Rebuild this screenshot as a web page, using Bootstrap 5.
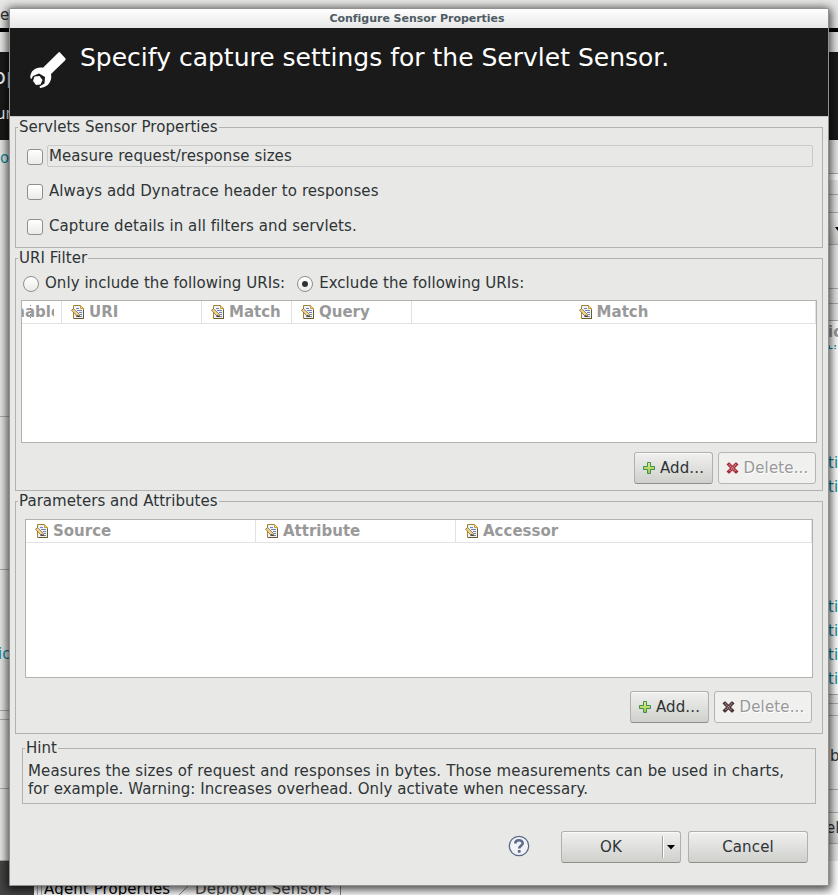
<!DOCTYPE html>
<html lang="en">
<head>
<meta charset="utf-8">
<title>Configure Sensor Properties</title>
<link href="https://cdn.jsdelivr.net/npm/bootstrap@5.3.0/dist/css/bootstrap.min.css" rel="stylesheet">
<style>
  body { width: 838px; height: 895px; overflow: hidden; font: 15px/18px "DejaVu Sans", sans-serif; letter-spacing: .08px; color: #2e3436; background: #fff; }
  .desktop { width: 838px; height: 895px; }
  /* windows behind the dialog */
  .parent-win { height: 861px; background: #e8e8e6; }
  .strip { display: grid; overflow: hidden; white-space: nowrap; align-content: start; }
  .strip > div { border-bottom: 1px solid #aaa; overflow: hidden; }
  .strip-l { width: 9px; grid-template-rows: 28px 4px 20px 88px 277px 153px 141px 9px 69px 72px; }
  .strip-r { width: 9px; grid-template-rows: 28px 4px 20px 88px 34px 6px 15px 18px 32px 44px 15px 17px 374px 9px 12px 74px 23px 31px 19px; }
  .strip > .blk { background: #000; border: 0; }
  .strip > .hdr { background: #1a1a1a; color: #fff; border: 0; }
  .strip > .plain { border: 0; }
  .strip > .tbl { background: #fff; }
  .strip > .face { background: linear-gradient(#f0f0ef, #cfcfcc); }
  .face svg { display: block; margin: 14px 0 0 6px; }
  .teal { color: #0c8c9c; }
  .big { font-size: 22px; line-height: 26px; padding-top: 12px; margin-left: -8px; }
  .t-e { padding-top: 6px; }
  .t-ur { padding-top: 15px; margin-left: -4px; }
  .t-o { padding-top: 9px; }
  .t-io { padding-top: 75px; margin-left: -2px; }
  .t-tbl { font-weight: bold; color: #999; padding-top: 2px; height: 22px; margin-left: -1px; }
  .t-cut { height: 6px; line-height: 18px; overflow: hidden; margin-left: -2px; }
  .t-ti { line-height: 24px; }
  .t-ti1 { padding-top: 102px; margin-left: -1px; }
  .t-ti2 { padding-top: 96px; }
  .t-b { padding-top: 31px; margin-left: 1px; }
  .t-el { padding-top: 6px; margin-left: -3px; }
  .below { height: 34px; }
  .dark-pane { width: 34px; background: #454545; }
  .tabs { color: #000; padding-top: 19px; margin-left: 3px; border-left: 1px solid #aaa; }
  .tabs .tab-a { border-left: 1px solid #aaa; padding-left: 2px; margin-left: 3px; width: 129px; }
  .tabs .tab-b { color: #444; width: 146px; border-right: 1px solid #888; }
  .tabs .slash { width: 25px; }
  /* dialog window */
  .dialog-win { position: absolute; left: 9px; top: 8px; width: 820px; height: 878px; border: 1px solid #90908e; border-radius: 2px 2px 0 0; background: #e8e8e6; box-shadow: 0 2px 10px 2px rgba(0,0,0,.72); }
  .titlebar { height: 19px; background: linear-gradient(#fff, #e6e6e6); font-size: 11px; line-height: 19px; letter-spacing: -.03px; font-weight: bold; color: #4e5c64; padding-right: 4px; }
  .banner { height: 88px; background: #1a1a1a; color: #fff; font-size: 25px; line-height: 30px; letter-spacing: 0; padding: 15px 0 0 20px; }
  .banner svg { margin-top: 8px; }
  .banner .heading { margin-left: 14px; }
  .content { border-top: 1px solid #c8c8c8; padding: 10px 5px 0; }
  .group { border: 1px solid #b2b2ae; margin-bottom: 10px; }
  .group .caption { display: table; height: 18px; margin: -10px 0 0 2px; padding: 0 1px; background: #e8e8e6; white-space: nowrap; letter-spacing: .04px; }
  .g1 { height: 121px; } .g2 { height: 233px; } .g3 { height: 233px; margin-bottom: 14px; }
  .g4 { height: 56px; margin: 0 7px 0 7px; }
  .opts { padding: 9px 9px 0 11px; gap: 13px; }
  .opt { height: 22px; gap: 4px; }
  .opt .txt { height: 22px; line-height: 18px; border: 1px solid transparent; padding: 1px; }
  .opt .focused { border-color: #cacaca; border-radius: 2px; }
  .box { width: 16px; height: 16px; margin-top: 2px; flex: none; border: 1px solid #8f8f8b; border-radius: 3px; background: linear-gradient(#fff, #ebebe9); }
  .dot { width: 16px; height: 16px; flex: none; border: 1px solid #8f8f8b; border-radius: 50%; background: linear-gradient(#fff, #ebebe9); }
  .dot.on::after { content: ""; display: block; width: 6px; height: 6px; margin: 4px; border-radius: 50%; background: #2e3436; }
  .radios { height: 22px; margin: 5px 0 0 7px; letter-spacing: .05px; }
  .radios .dot { margin-top: 2px; }
  .radios .txt { margin-left: 6px; margin-right: 12px; }
  .grid-box { border: 1px solid #b2b2ae; background: #fff; }
  .grid-1 { height: 143px; margin: 6px 5px 0 5px; }
  .grid-2 { height: 159px; margin: 9px 9px 0 9px; }
  .grid-head { height: 23px; border-bottom: 1px solid #e2e2e2; font-weight: bold; letter-spacing: 0; color: #999; line-height: 22px; }
  .grid-head > div { border-right: 1px solid #e2e2e2; padding-left: 9px; overflow: hidden; white-space: nowrap; height: 22px; }
  .grid-head svg { margin-right: 5px; flex: none; margin-top: 4px; }
  .grid-head .c40 { width: 40px; padding: 0 7px 0 0; }
  .c40 .clip { width: 32px; overflow: hidden; background: repeating-linear-gradient(#777 0 1px, transparent 1px 3px) 8px 4px / 1px 13px no-repeat; }
  .c40 .clip span { margin-left: -18px; }
  .c140 { width: 140px; } .c90 { width: 90px; } .c120 { width: 120px; } .c404 { width: 404px; }
  .c230 { width: 230px; } .c200 { width: 200px; } .c356 { width: 356px; }
  .grid-head .c404 { padding-left: 0; }
  .actions { gap: 5px; }
  .a1 { margin: 9px 6px 0 0; } .a2 { margin: 13px 10px 0 0; }
  .btn.gtk { --bs-btn-padding-x: 0; --bs-btn-padding-y: 0; height: 32px; border: 1px solid #b0b0ac; border-bottom-color: #8e8e8a; border-radius: 3px; color: #2e3436; font-size: 15px; line-height: 18px; letter-spacing: .15px; background: linear-gradient(#f0f0ef, #e0e0de 50%, #cfcfcc); box-shadow: inset 0 1px #fafafa; }
  .btn.gtk.disabled { opacity: 1; color: #999; text-shadow: 1px 1px #fff; background: #f0f0ef; border-color: #b4b4b0; box-shadow: none; }
  .btn.gtk svg { margin-right: 5px; }
  .w-add { width: 79px; } .w-del { width: 98px; } .w-main { width: 120px; }
  .hint-text { padding: 5px 0 0 5px; white-space: nowrap; letter-spacing: .125px; }
  .hint-text .line2 { letter-spacing: .06px; }
  .footer-row { margin: 27px 15px 0 0; }
  .footer-row .help { margin: -2px 31px 0 0; }
  .footer-row .gap-btn { margin-right: 7px; }
  .ok-lbl { width: 101px; height: 22px; line-height: 22px; padding-right: 2px; border-right: 1px solid #a0a09c; box-shadow: 1px 0 #fff; }
</style>
<script src="https://cdn.jsdelivr.net/npm/bootstrap@5.3.0/dist/js/bootstrap.bundle.min.js"></script>
</head>
<body>
<div class="desktop">
  <div class="parent-win d-flex justify-content-between">
    <div class="strip strip-l">
      <div class="plain"><div class="t-e">e</div></div>
      <div class="blk"></div>
      <div class="plain"></div>
      <div class="hdr"><div class="big">pp</div><div class="t-ur">ur</div></div>
      <div><div class="t-o teal">o</div></div>
      <div></div>
      <div><div class="t-io teal">ic</div></div>
      <div></div><div></div><div></div>
    </div>
    <div class="strip strip-r">
      <div class="plain"></div>
      <div class="blk"></div>
      <div class="plain"></div>
      <div class="hdr"></div>
      <div></div><div class="tbl plain"></div><div></div><div></div>
      <div class="face"><svg width="6" height="4" viewBox="0 0 6 4"><path d="M0 0h6L3 4z"/></svg></div>
      <div></div><div></div><div></div>
      <div class="tbl"><div class="t-tbl">io</div><div class="t-cut teal">ti</div><div class="t-ti t-ti1 teal">ti<br>ti<div class="t-ti2">ti<br>ti<br>ti<br>ti</div></div></div>
      <div></div><div></div>
      <div><div class="t-b">b</div></div>
      <div></div>
      <div class="face"><div class="t-el">el</div></div>
      <div></div>
    </div>
  </div>
  <div class="below d-flex">
    <div class="dark-pane"></div>
    <div class="tabs d-flex flex-grow-1 text-nowrap">
      <div class="tab-a">Agent Properties</div>
      <div class="slash text-center"><svg width="12" height="14" viewBox="0 0 12 14"><path d="M1 13 11 3" stroke="#888"/></svg></div>
      <div class="tab-b">Deployed Sensors</div>
    </div>
  </div>
</div>

<main class="dialog-win">
  <div class="titlebar text-center">Configure Sensor Properties</div>
  <div class="banner d-flex">
    <svg width="36" height="38" viewBox="0 0 36 38">
      <path d="M29.500 1 35.500 7.500Q36 8.500 35 9.500L21 23C22.500 30 18 36.500 10 37L9.500 35.500 14.500 32.500 15 26 9 22.500 3 25 1.500 28 .3 27C0 19 7 15.500 13 16.800L28 2Q29 1 29.500 1z" fill="#fff"/>
      <path d="M4.500 25.500 9.500 25 12.500 29 10.500 33.500 6 34 3 30z" fill="#fff"/>
    </svg>
    <div class="heading">Specify capture settings for the Servlet Sensor.</div>
  </div>
  <div class="content">
    <section class="group g1">
      <div class="caption">Servlets Sensor Properties</div>
      <div class="opts d-flex flex-column">
        <div class="opt d-flex align-items-center"><span class="box"></span><span class="txt focused flex-grow-1">Measure request/response sizes</span></div>
        <div class="opt d-flex align-items-center"><span class="box"></span><span class="txt">Always add Dynatrace header to responses</span></div>
        <div class="opt d-flex align-items-center"><span class="box"></span><span class="txt">Capture details in all filters and servlets.</span></div>
      </div>
    </section>

    <section class="group g2">
      <div class="caption">URI Filter</div>
      <div class="radios d-flex align-items-center">
        <span class="dot"></span><span class="txt">Only include the following URIs:</span>
        <span class="dot on"></span><span class="txt">Exclude the following URIs:</span>
      </div>
      <div class="grid-box grid-1">
        <div class="grid-head d-flex">
          <div class="c40"><div class="clip"><span>Enabled</span></div></div>
          <div class="c140 d-flex"><svg width="13" height="14"><use href="#i-edit"/></svg>URI</div>
          <div class="c90 d-flex"><svg width="13" height="14"><use href="#i-edit"/></svg>Match</div>
          <div class="c120 d-flex"><svg width="13" height="14"><use href="#i-edit"/></svg>Query</div>
          <div class="c404 d-flex justify-content-center"><svg width="13" height="14"><use href="#i-edit"/></svg>Match</div>
        </div>
      </div>
      <div class="actions a1 d-flex justify-content-end">
        <button class="btn gtk w-add d-flex align-items-center justify-content-center"><svg width="12" height="12"><use href="#i-plus"/></svg>Add...</button>
        <button class="btn gtk disabled w-del d-flex align-items-center justify-content-center"><svg width="13" height="12" color="#a82c38"><use href="#i-cross"/></svg>Delete...</button>
      </div>
    </section>

    <section class="group g3">
      <div class="caption">Parameters and Attributes</div>
      <div class="grid-box grid-2">
        <div class="grid-head d-flex">
          <div class="c230 d-flex"><svg width="13" height="14"><use href="#i-edit"/></svg>Source</div>
          <div class="c200 d-flex"><svg width="13" height="14"><use href="#i-edit"/></svg>Attribute</div>
          <div class="c356 d-flex"><svg width="13" height="14"><use href="#i-edit"/></svg>Accessor</div>
        </div>
      </div>
      <div class="actions a2 d-flex justify-content-end">
        <button class="btn gtk w-add d-flex align-items-center justify-content-center"><svg width="12" height="12"><use href="#i-plus"/></svg>Add...</button>
        <button class="btn gtk disabled w-del d-flex align-items-center justify-content-center"><svg width="13" height="12" color="#4c3035"><use href="#i-cross"/></svg>Delete...</button>
      </div>
    </section>

    <section class="group g4">
      <div class="caption">Hint</div>
      <div class="hint-text">Measures the sizes of request and responses in bytes. Those measurements can be used in charts,<br><span class="line2">for example. Warning: Increases overhead. Only activate when necessary.</span></div>
    </section>

    <div class="footer-row d-flex justify-content-end align-items-center">
      <svg class="help" width="22" height="22" viewBox="0 0 22 22">
        <circle cx="11" cy="11" r="9.700" fill="#f2f3f6" stroke="#5c6b8c" stroke-width="1.300"/>
        <path d="M7.300 8.600C7.300 4.200 14.700 4.300 14.700 8.300 14.700 10.800 11.200 10.800 11.200 13.500" fill="none" stroke="#5c6b8c" stroke-width="2.600"/>
        <rect x="9.800" y="15" width="2.900" height="2.700" rx=".8" fill="#5c6b8c"/>
      </svg>
      <button class="btn gtk w-main gap-btn d-flex align-items-center"><span class="ok-lbl">OK</span><svg class="ms-1 me-0" width="8" height="5" viewBox="0 0 8 5"><path d="M0 0h8L4 4.500z" fill="#000"/></svg></button>
      <button class="btn gtk w-main">Cancel</button>
    </div>
  </div>
</main>

<svg width="0" height="0" class="d-block">
  <defs><linearGradient id="pg" x2="0" y2="1"><stop stop-color="#e4ef90"/><stop offset="1" stop-color="#96c83c"/></linearGradient></defs>
  <symbol id="i-edit" viewBox="0 0 13 14">
    <path d="M2.500.5h7l3 3v10h-10z" fill="#edf2fb" stroke="#a8802a"/>
    <path d="M9.500.5v3h3" fill="#f5d98c" stroke="#c79a35"/>
    <path d="M12.500 5v8.500H3" fill="none" stroke="#6a5a2c"/>
    <path d="M5 3.500h3M6 5.500h5M8 7.500h3M9 9.500h2M5 11.500h6" stroke="#6f83b5"/>
    <path d="M.5 5.200 2.500 3.800 8.300 9.300 8.700 11.700 6 11z" fill="#f3d797" stroke="#8a6526" stroke-width=".8"/>
    <path d="m6.500 9.800 2.400 2.200-2.700-.6z" fill="#223"/>
  </symbol>
  <symbol id="i-plus" viewBox="0 0 12 12">
    <path d="M4.500.5h3v4h4v3h-4v4h-3v-4h-4v-3h4z" fill="url(#pg)" stroke="#3f8f52"/>
  </symbol>
  <symbol id="i-cross" viewBox="0 0 13 12">
    <path d="M.5 2.500 2.500.5h1l3 3 3-3h1l2 2-3.500 3.500 3.500 3.500-2 2h-1l-3-3-3 3h-1l-2-2L4 6z" fill="currentColor"/>
    <path d="m3 2.500 7 7m0-7-7 7" stroke="#fff" stroke-opacity=".5" stroke-width="1.600" stroke-dasharray="1 1"/>
  </symbol>
</svg>
</body>
</html>
